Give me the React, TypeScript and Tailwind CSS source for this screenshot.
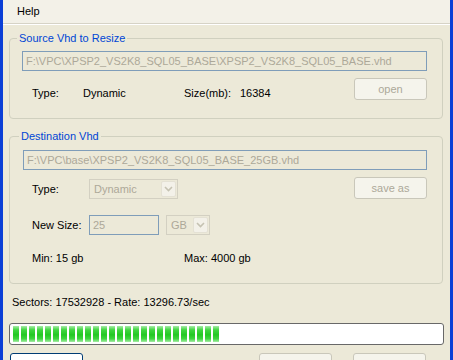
import React from "react";

const font = { fontFamily: '"Liberation Sans", Arial, sans-serif' };

function Chevron() {
  return (
    <svg width="9" height="6" viewBox="0 0 9 6">
      <polyline points="1,1 4.5,4.5 8,1" fill="none" stroke="#c5c2b2" strokeWidth="1.6" />
    </svg>
  );
}

function DisabledSelect({ value, width }: { value: string; width: string }) {
  return (
    <div className={`${width} h-[20px] flex items-stretch border border-[#d3d0c2] bg-[#ece9d8] text-[#aca899]`}>
      <span className="flex-1 pl-[4px] leading-[18px]">{value}</span>
      <span className="w-[15px] m-[1px] flex items-center justify-center border border-[#e4e1d4] bg-[#f3f1e9] rounded-[2px]">
        <Chevron />
      </span>
    </div>
  );
}

function DisabledButton({ label, className = "" }: { label: string; className?: string }) {
  return (
    <div
      className={`h-[22px] w-[73px] rounded-[3px] border border-[#c9c7ba] bg-[#f5f4ec] text-[#aca899] flex items-center justify-center ${className}`}
    >
      {label}
    </div>
  );
}

export default function App() {
  const blocks = Array.from({ length: 26 });
  return (
    <div
      className="w-[453px] h-[360px] overflow-hidden bg-[#ece9d8] border-l-[3px] border-r-[3px] border-[#0b3fd6] text-[11px] text-black flex flex-col"
      style={font}
    >
      {/* Menu bar */}
      <div className="h-[23px] shrink-0 bg-[#f3f1e8] flex items-center pl-[14px]">Help</div>
      <div className="h-[1px] shrink-0 bg-[#d6d3c6]" />
      <div className="h-[1px] shrink-0 bg-white" />

      {/* Source group */}
      <fieldset className="mt-[7px] ml-[6px] mr-[7px] border border-[#d0d0bf] rounded-[4px] pl-[12px] pr-[15px] pb-[18px]">
        <legend className="ml-[-5px] px-[2px] leading-[13px] text-[#0046d5]">Source Vhd to Resize</legend>
        <div className="mt-[6px] h-[20px] border border-[#7f9db9] bg-[#ece9d8] text-[#aca899] pl-[3px] leading-[18px] whitespace-nowrap overflow-hidden">
          F:\VPC\XPSP2_VS2K8_SQL05_BASE\XPSP2_VS2K8_SQL05_BASE.vhd
        </div>
        <div className="mt-[7px] flex items-start">
          <div className="mt-[9px] pl-[10px] flex leading-[13px]">
            <span className="w-[51px]">Type:</span>
            <span className="w-[101px]">Dynamic</span>
            <span className="w-[56px]">Size(mb):</span>
            <span>16384</span>
          </div>
          <DisabledButton label="open" className="ml-auto" />
        </div>
      </fieldset>

      {/* Destination group */}
      <fieldset className="mt-[11px] ml-[6px] mr-[7px] border border-[#d0d0bf] rounded-[4px] pl-[13px] pr-[15px] pb-[18px]">
        <legend className="ml-[-4px] px-[2px] leading-[13px] text-[#0046d5]">Destination Vhd</legend>
        <div className="mt-[7px] h-[20px] border border-[#7f9db9] bg-[#ece9d8] text-[#aca899] pl-[3px] leading-[18px] whitespace-nowrap overflow-hidden">
          F:\VPC\base\XPSP2_VS2K8_SQL05_BASE_25GB.vhd
        </div>
        <div className="mt-[7px] flex items-start">
          <div className="pl-[9px] mt-[2px] flex items-center">
            <span className="w-[57px]">Type:</span>
            <DisabledSelect value="Dynamic" width="w-[89px]" />
          </div>
          <DisabledButton label="save as" className="ml-auto h-[21px]" />
        </div>
        <div className="mt-[16px] pl-[9px] flex items-center">
          <span className="w-[57px]">New Size:</span>
          <div className="w-[70px] h-[20px] border border-[#7f9db9] bg-[#ece9d8] text-[#aca899] pl-[3px] leading-[18px]">25</div>
          <div className="ml-[7px]">
            <DisabledSelect value="GB" width="w-[44px]" />
          </div>
        </div>
        <div className="mt-[17px] pl-[9px] flex leading-[13px]">
          <span className="w-[152px]">Min: 15 gb</span>
          <span>Max: 4000 gb</span>
        </div>
      </fieldset>

      {/* Status */}
      <div className="mt-[12px] ml-[9px] leading-[13px]">Sectors: 17532928 - Rate: 13296.73/sec</div>

      {/* Progress bar */}
      <div className="mt-[14px] ml-[6px] mr-[6px] h-[22px] shrink-0 rounded-[3px] border border-[#686868] bg-white flex items-center pl-[3px] gap-[2px]">
        {blocks.map((_, i) => (
          <div
            key={i}
            className="w-[6px] h-[16px] shrink-0 bg-[linear-gradient(to_bottom,#a8eca8_0%,#3ed53e_25%,#22c822_55%,#3ed53e_80%,#a8eca8_100%)]"
          />
        ))}
      </div>

      {/* Buttons */}
      <div className="mt-[8px] flex items-start shrink-0">
        <div className="ml-[7px] h-[23px] w-[73px] rounded-[3px] border border-[#003c74] bg-white flex items-center justify-center">
          expand
        </div>
        <DisabledButton label="resize" className="ml-[176px] h-[23px]" />
        <DisabledButton label="exit" className="ml-[21px] h-[23px]" />
      </div>
    </div>
  );
}
